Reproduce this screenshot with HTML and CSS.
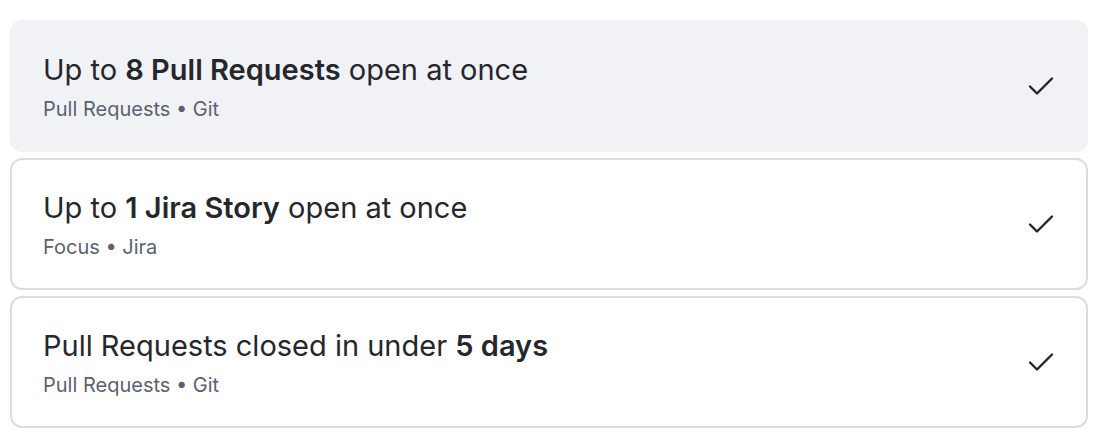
FILE: index.html
```html
<!DOCTYPE html>
<html>
<head>
<meta charset="utf-8">
<link rel="stylesheet" href="styles.css">
</head>
<body>
<div class="list">
  <div class="card active">
    <div class="text">
      <div class="title">Up to <b>8 Pull Requests</b> open at once</div>
      <div class="sub">Pull Requests • Git</div>
    </div>
    <svg class="check" viewBox="0 0 26 20" width="26" height="20"><path d="M2 10.5l7 7L24 2.5" fill="none" stroke="#24262b" stroke-width="2.4" stroke-linecap="round" stroke-linejoin="round"/></svg>
  </div>
  <div class="card">
    <div class="text">
      <div class="title">Up to <b>1 Jira Story</b> open at once</div>
      <div class="sub">Focus • Jira</div>
    </div>
    <svg class="check" viewBox="0 0 26 20" width="26" height="20"><path d="M2 10.5l7 7L24 2.5" fill="none" stroke="#24262b" stroke-width="2.4" stroke-linecap="round" stroke-linejoin="round"/></svg>
  </div>
  <div class="card">
    <div class="text">
      <div class="title">Pull Requests closed in under <b>5 days</b></div>
      <div class="sub">Pull Requests • Git</div>
    </div>
    <svg class="check" viewBox="0 0 26 20" width="26" height="20"><path d="M2 10.5l7 7L24 2.5" fill="none" stroke="#24262b" stroke-width="2.4" stroke-linecap="round" stroke-linejoin="round"/></svg>
  </div>
</div>
</body>
</html>
```
FILE: styles.css
```css
html, body { margin: 0; padding: 0; background: #fff; }
body { font-family: Inter, "Noto Sans", sans-serif; color: #25272c; }
.list { display: flex; flex-direction: column; gap: 6px; padding: 20px 20px 0 10px; }
.card {
  height: 132px;
  box-sizing: border-box;
  border: 2px solid #dcdcdf;
  border-radius: 12px;
  display: flex;
  align-items: center;
  justify-content: space-between;
  padding: 0 32px 0 31px;
}
.card.active { background: #f1f2f6; border-color: #f1f2f6; }
.text { display: flex; flex-direction: column; gap: 8px; padding-top: 2px; }
.title { font-size: 29px; line-height: 36px; }
.title b { font-weight: 600; }
.sub { font-size: 20px; line-height: 26px; color: #5b6172; }
.check { flex: none; }
```
